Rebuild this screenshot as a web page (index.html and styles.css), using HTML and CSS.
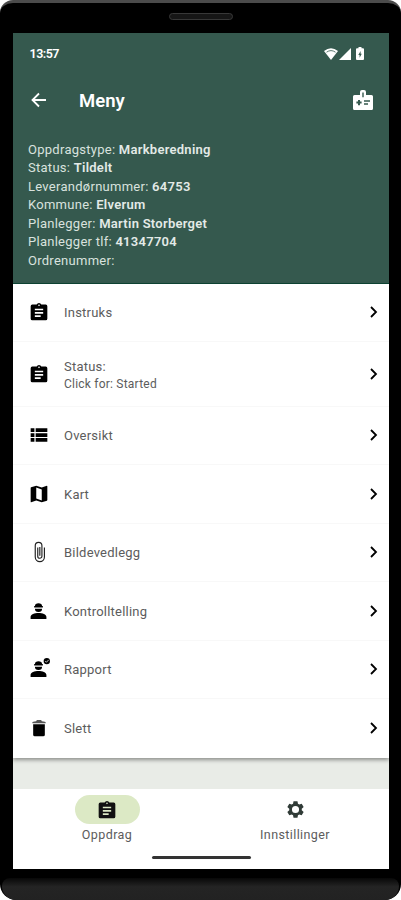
FILE: index.html
```html
<!DOCTYPE html>
<html lang="no">
<head>
    <meta charset="UTF-8">
    <meta name="viewport" content="width=device-width,user-scalable=no">
    <title>Meny</title>
    <link rel="stylesheet" href="styles.css">
</head>
<body>
<svg class="defs" width="0" height="0">
    <symbol id="clipboard" viewBox="0 0 24 24"><path fill-rule="evenodd" d="M20 3h-5.200a3 3 0 0 0-5.600 0H4a2 2 0 0 0-2 2v15a2 2 0 0 0 2 2h16a2 2 0 0 0 2-2V5a2 2 0 0 0-2-2zm-8 0a1 1 0 1 1 0 2 1 1 0 0 1 0-2zm2 15H7v-2h7zm3-4H7v-2h10zm0-4H7V8h10z"/></symbol>
    <symbol id="chevron" viewBox="0 0 10 14"><path d="M2 2l5 5-5 5" fill="none" stroke="currentColor" stroke-width="1.8"/></symbol>
    <symbol id="worker" viewBox="0 0 24 24"><path d="M12 14.500c-5 0-10 1.800-10 5V22h20v-2.500c0-3.200-5-5-10-5zM7.500 9.200a4.500 4 0 0 0 9 0zM6.500 5.800h11v1.800h-11zM7.500 5.800C7.500 3.500 9.300 2.300 12 2.300s4.500 1.200 4.500 3.500z"/></symbol>
</svg>
<div class="phone">
    <div class="speaker"><i></i></div>
    <main class="screen">
        <header class="head">
            <div class="status-bar">
                <span class="clock">13:57</span>
                <svg class="wifi" viewBox="0 0 14 12"><path d="M0 3Q7-2.500 14 3L7 12z"/><path d="M2.500 4.200Q7 1 11.500 4.200" fill="none" stroke="#35594e" stroke-width=".8"/></svg>
                <svg class="signal" viewBox="0 0 12 12"><path d="M12 0v12H0z"/></svg>
                <svg class="battery" viewBox="0 0 8 13"><path fill-rule="evenodd" d="M2.500 0h3v1.300H7q1 0 1 1V12q0 1-1 1H1q-1 0-1-1V2.300q0-1 1-1h1.500zM4.600 4L2.300 8h1.300v2.700L5.800 6.800H4.600z"/></svg>
            </div>
            <div class="title-bar">
                <svg class="back" viewBox="0 0 16 16"><path d="M15 8H2M8 1.500L1.500 8 8 14.500"/></svg>
                <h1>Meny</h1>
                <svg class="badge" viewBox="0 0 20 20"><path fill-rule="evenodd" d="M18.500 5H13V2q0-2-2-2H9Q7 0 7 2v3H1.500Q0 5 0 6.500v12Q0 20 1.500 20h17q1.500 0 1.500-1.500v-12Q20 5 18.500 5zM9.300 2.500h1.400v4.800H9.300zM5 10h2v1.600h1.600v2H7v1.600H5v-1.600H3.400v-2H5zm6 .3h6v1.400h-6zm0 3h4v1.400h-4z"/></svg>
            </div>
            <div class="info">
                <p>Oppdragstype: <b>Markberedning</b></p>
                <p>Status: <b>Tildelt</b></p>
                <p>Leverandørnummer: <b>64753</b></p>
                <p>Kommune: <b>Elverum</b></p>
                <p>Planlegger: <b>Martin Storberget</b></p>
                <p>Planlegger tlf: <b>41347704</b></p>
                <p>Ordrenummer:</p>
            </div>
        </header>
        <ul class="list">
            <li><svg class="icon"><use href="#clipboard"/></svg><span>Instruks</span><svg class="go"><use href="#chevron"/></svg></li>
            <li class="tall"><svg class="icon"><use href="#clipboard"/></svg><span>Status:<small>Click for: Started</small></span><svg class="go"><use href="#chevron"/></svg></li>
            <li><svg class="icon" viewBox="0 0 24 24"><path d="M2 4h4.500v4.500H2zM8 4h14v4.500H8zM2 9.800h4.500v4.500H2zM8 9.800h14v4.500H8zM2 15.600h4.500V20H2zM8 15.600h14V20H8z"/></svg><span>Oversikt</span><svg class="go"><use href="#chevron"/></svg></li>
            <li><svg class="icon" viewBox="0 0 24 24"><path fill-rule="evenodd" d="M21.400 2L15.300 4.300 8.700 2 2.500 4q-.5.200-.5.700v16.700q0 .6.600.6l6.100-2.300 6.600 2.300 6.200-2q.5-.2.500-.7V2.600q0-.6-.6-.6zM15.300 19.700l-6.600-2.300V4.300l6.600 2.300z"/></svg><span>Kart</span><svg class="go"><use href="#chevron"/></svg></li>
            <li><svg class="icon clip" viewBox="0 0 24 24"><path d="M18.500 6.500v11.500a5.500 5.500 0 0 1-11 0V4.500a4 4 0 0 1 8 0v12.500a2.500 2.500 0 0 1-5 0V6.500M13 6v10.500"/></svg><span>Bildevedlegg</span><svg class="go"><use href="#chevron"/></svg></li>
            <li><svg class="icon person"><use href="#worker"/></svg><span>Kontrolltelling</span><svg class="go"><use href="#chevron"/></svg></li>
            <li><svg class="icon person" viewBox="0 0 24 24"><use href="#worker"/><circle cx="22.500" cy="2" r="4"/><path d="M20.500 2l1.500 1.500 2.800-3" fill="none" stroke="#fff"/></svg><span>Rapport</span><svg class="go"><use href="#chevron"/></svg></li>
            <li><svg class="icon" viewBox="0 0 24 24"><path d="M5 7.500h14V20q0 2-2 2H7q-2 0-2-2z"/><path d="M4 5.500q0-1.500 4.500-1.700L9.500 2.500h5l1 1.300Q20 4 20 5.500v.8H4z" fill="#555"/></svg><span>Slett</span><svg class="go"><use href="#chevron"/></svg></li>
        </ul>
        <nav class="tabs">
            <a class="active"><i><svg class="icon"><use href="#clipboard"/></svg></i>Oppdrag</a>
            <a><i><svg class="icon gear" viewBox="0 0 24 24"><path fill-rule="evenodd" d="M9.500 1.500h5l.6 3.200 1.700 1 3-1.100 2.500 4.300-2.400 2.100v2l2.400 2.100-2.500 4.300-3-1.100-1.700 1-.6 3.200h-5l-.6-3.200-1.700-1-3 1.100-2.500-4.300 2.400-2.100v-2L1.700 8.900l2.500-4.300 3 1.100 1.700-1zM12 7.500a4.500 4.500 0 1 0 0 9 4.500 4.500 0 0 0 0-9z"/></svg></i>Innstillinger</a>
        </nav>
        <div class="home"></div>
    </main>
    <div class="chin"></div>
</div>
</body>
</html>
```
FILE: styles.css
```css
html,body{ height:100%; }
body,ul,p,h1{ margin:0; padding:0;}
body{ background:#fff; font-family:Roboto,"Liberation Sans",sans-serif; overflow:hidden;}
svg{ display:block; fill:currentColor;}
.defs{ position:absolute;}
.phone{
    box-sizing:border-box;
    width:401px;
    height:900px;
    display:flex;
    flex-direction:column;
    background:#000;
    border-top:3px solid #4b4b4b;
    border-radius:13px 13px 16px 16px;
    overflow:hidden;
}
.speaker{
    flex:none;
    height:29.5px;
    display:flex;
    justify-content:center;
    align-items:flex-start;
}
.speaker i{
    box-sizing:border-box;
    width:64px;
    height:7px;
    margin-top:10px;
    border:1px solid #383838;
    border-radius:4px;
    background:#161616;
}
.screen{
    flex:none;
    width:376px;
    height:836.5px;
    margin-left:13px;
    display:flex;
    flex-direction:column;
    background:#e9ece7;
}
.head{
    box-sizing:border-box;
    height:251px;
    background:#35594e;
    border-bottom:1px solid #0d4535;
    color:#fff;
}
.status-bar{
    display:flex;
    align-items:center;
    height:42px;
    padding:0 25px 0 16.5px;
}
.clock{ flex:1; font-size:12.5px; font-weight:600; letter-spacing:-.5px;}
.wifi{ width:14px; height:12px;}
.signal{ width:12px; height:12px; margin-left:1px;}
.battery{ width:8px; height:13px; margin-left:5px;}
.title-bar{
    display:flex;
    align-items:center;
    height:52px;
    padding:0 16px 0 18px;
}
.back{ width:16px; height:16px; margin-top:-1px; fill:none; stroke:#fff; stroke-width:1.8;}
.title-bar h1{ flex:1; margin-left:32px; font-size:18.5px; font-weight:600; line-height:24px;}
.badge{ width:20px; height:20px; margin-top:-1px;}
.info{
    padding:14px 0 0 15px;
    color:#d9e2de;
    font-size:13px;
    line-height:18.5px;
    letter-spacing:.27px;
}
.info b{ font-weight:600; color:#e3eae7;}
.list{ list-style:none; background:#fff; box-shadow:0 2px 4px rgba(0,0,0,.4);}
.list li{
    box-sizing:border-box;
    display:flex;
    align-items:center;
    height:58.5px;
    padding:2px 10px 0 15.5px;
    border-bottom:1px solid #f8f8f8;
    color:#000;
}
.list li.tall{ height:64.5px;}
.list li:last-child{ border:0; padding-top:1px;}
.list span{
    flex:1;
    margin-left:15.5px;
    color:#5c5c5c;
    font-size:13px;
    line-height:18px;
    letter-spacing:.22px;
}
.list small{ display:block; font-size:12px; line-height:16px;}
.icon{ width:20px; height:20px; overflow:visible;}
.list .icon,.go{ margin-top:-2px;}
.clip{ fill:none; stroke:#222; stroke-width:1.4;}
.list .person{ width:19px; margin-right:1px;}
.go{ width:10px; height:14px;}
.tabs{
    flex:none;
    display:flex;
    height:80px;
    margin-top:auto;
    background:#fff;
}
.tabs a{
    flex:1;
    display:flex;
    flex-direction:column;
    align-items:center;
    padding-top:6px;
    color:#5c5c5c;
    font-size:12.5px;
    line-height:22px;
    letter-spacing:.4px;
}
.tabs i{
    display:flex;
    align-items:center;
    justify-content:center;
    width:65px;
    height:29px;
    border-radius:15px;
    color:#111;
}
.tabs .active i{ background:#dce9c5;}
.tabs .gear{ width:19px; height:19px; color:#303b37;}
.home{
    width:99px;
    height:3px;
    margin:-13px auto 10px;
    border-radius:2px;
    background:#333;
}
.chin{
    height:22px;
    margin:9px 2px 0;
    border-radius:8px 8px 14px 14px;
    background:linear-gradient(#080808,#242424 40%,#222);
}
```
